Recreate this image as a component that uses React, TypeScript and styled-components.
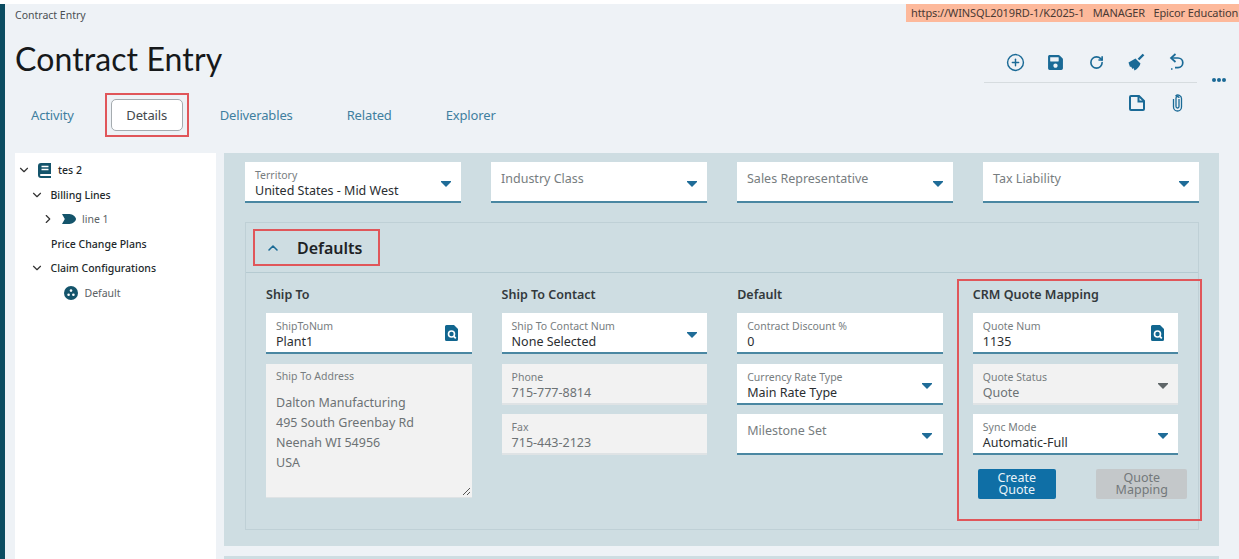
import React from 'react'
import styled, { createGlobalStyle } from 'styled-components'
import { ChevronDown, ChevronRight, ChevronUp, CirclePlus, RotateCw } from 'lucide-react'
import { FaSave } from 'react-icons/fa'

const GlobalStyle = createGlobalStyle`
  html, body {
    margin: 0;
    padding: 0;
    background: #eef2f6;
    font-family: "Noto Sans", "Open Sans", sans-serif;
  }
  * { box-sizing: border-box; }
`

const Page = styled.div`
  width: 1239px;
  height: 559px;
  overflow: hidden;
  padding-top: 4px;
  background: #fff;
`

const Shell = styled.div`
  display: flex;
  height: 555px;
  background: #eef2f6;
`

const SideBar = styled.div`
  width: 5px;
  background: #0b4c61;
`

const Content = styled.div`
  width: 1234px;
  padding-left: 10px;
`

const Header = styled.header`
  display: flex;
  justify-content: space-between;
  height: 149px;
`

const TitleBlock = styled.div`
  display: flex;
  flex-direction: column;
`

const Breadcrumb = styled.div`
  font-size: 10.5px;
  line-height: 22px;
  color: #4a4f52;
`

const Title = styled.h1`
  margin: 11px 0 0;
  font-family: "Lato", "Noto Sans", sans-serif;
  font-size: 32px;
  letter-spacing: 0.1px;
  font-weight: 400;
  line-height: 44px;
  color: #16191b;
`

const TabBar = styled.nav`
  display: flex;
  align-items: center;
  gap: 31px;
  height: 44px;
  margin-top: 12px;
  padding-left: 16px;
`

const TabLink = styled.span`
  font-size: 13px;
  letter-spacing: -0.15px;
  color: #3f7f9f;
  & + & {
    margin-left: 23px;
  }
`

const ActiveTabFrame = styled.div`
  width: 84px;
  height: 44px;
  padding: 4px;
  border: 2px solid #e0565a;
`

const ActiveTab = styled.div`
  display: flex;
  align-items: center;
  justify-content: center;
  height: 100%;
  font-size: 13px;
  letter-spacing: -0.15px;
  color: #43494d;
  background: #fff;
  border: 1px solid #a5abaf;
  border-radius: 5px;
`

const ActionBlock = styled.div`
  width: 333px;
`

const EnvBadge = styled.div`
  height: 18px;
  padding-left: 5px;
  font-size: 11px;
  letter-spacing: -0.1px;
  line-height: 18px;
  white-space: nowrap;
  color: #4a3a34;
  background: #fdb99b;
`

const ToolbarRow = styled.div`
  display: flex;
  align-items: center;
  margin-left: 78px;
`

const Toolbar = styled.div`
  width: 213px;
`

const ToolGroup = styled.div<{ $second?: boolean }>`
  display: grid;
  grid-template-columns: repeat(5, 40.5px);
  padding: ${p => (p.$second ? '10px 0 0 11px' : '30px 0 10px 11px')};
  border-top: ${p => (p.$second ? '1px solid #d6dcdf' : 'none')};
`

const ToolButton = styled.span<{ $column?: number }>`
  display: flex;
  align-items: center;
  justify-content: center;
  height: 20px;
  color: #1a6a96;
  grid-column: ${p => p.$column ?? 'auto'};
`

const MoreDots = styled.div`
  display: flex;
  gap: 1px;
  margin: 24px 0 0 15px;
`

const Dot = styled.i`
  width: 4px;
  height: 4px;
  border-radius: 50%;
  background: #1a6a96;
`

const Body = styled.div`
  display: flex;
  gap: 8px;
`

const TreePanel = styled.aside`
  width: 201px;
  height: 406px;
  padding-top: 5px;
  background: #fff;
`

const TreeRow = styled.div<{ $indent: number; $bold?: boolean }>`
  display: flex;
  align-items: center;
  gap: 6.5px;
  height: 24.5px;
  padding-left: ${p => p.$indent}px;
  font-size: 10.5px;
  font-weight: ${p => (p.$bold ? 500 : 400)};
  color: ${p => (p.$bold ? '#22282b' : '#5b6265')};
`

const Workspace = styled.div`
  width: 995px;
`

const MainPanel = styled.main`
  height: 393px;
  padding: 9px 20px 0 21px;
  background: #cedde2;
`

const NextPanel = styled.div`
  height: 10px;
  margin-top: 10px;
  background: #cedde2;
`

const FieldRow = styled.div`
  display: grid;
  grid-template-columns: repeat(4, 216px);
  gap: 30px;
`

const FieldBox = styled.div<{ $disabled?: boolean; $padRight?: number }>`
  display: flex;
  align-items: center;
  justify-content: space-between;
  height: 41px;
  padding: 0 ${p => p.$padRight ?? 10.5}px 0 10px;
  background: ${p => (p.$disabled ? '#f2f2f2' : '#fff')};
  border-bottom: 2px solid ${p => (p.$disabled ? '#dfe3e5' : '#4a87a2')};
`

const FieldText = styled.div`
  align-self: flex-start;
  padding-top: 6px;
`

const FieldLabel = styled.div`
  font-size: 10.5px;
  line-height: 14px;
  color: #777d80;
`

const FieldValue = styled.div<{ $muted?: boolean }>`
  margin-top: 1px;
  font-size: 12.5px;
  line-height: 16px;
  white-space: nowrap;
  color: ${p => (p.$muted ? '#6d7275' : '#2a2e31')};
`

const FieldPlaceholder = styled.div`
  padding-top: 1px;
  font-size: 12.5px;
  line-height: 20px;
  color: #777d80;
`

const CaretIcon = styled.svg<{ $muted?: boolean }>`
  flex: none;
  width: 10px;
  height: 6px;
  margin-top: 5px;
  fill: ${p => (p.$muted ? '#5f6668' : '#1f6c98')};
`

const LookupIcon = styled.svg`
  flex: none;
  width: 13px;
  height: 16px;
`

const Section = styled.section`
  height: 308px;
  margin-top: 19px;
  border: 1px solid #bfd0d6;
`

const SectionHeader = styled.div`
  display: flex;
  align-items: center;
  height: 50px;
  padding-left: 7px;
  border-bottom: 1px solid #b5cad1;
`

const SectionTitleFrame = styled.div`
  display: flex;
  align-items: center;
  gap: 16px;
  width: 127px;
  height: 37px;
  padding: 1px 0 0 10px;
  font-size: 16px;
  font-weight: 600;
  color: #1d2225;
  border: 2px solid #e0565a;
  svg {
    color: #1a6a96;
  }
`

const Columns = styled.div`
  display: grid;
  grid-template-columns: repeat(4, 205.5px);
  column-gap: 30.1px;
  padding: 11px 0 0 20px;
`

const Column = styled.div`
  display: flex;
  flex-direction: column;
  gap: 9.5px;
`

const MarkedColumn = styled(Column)`
  position: relative;
  &::after {
    content: '';
    position: absolute;
    inset: -5px -24px -22px -16px;
    border: 2px solid #e0565a;
    pointer-events: none;
  }
`

const ColumnTitle = styled.h3`
  margin: 0;
  height: 19.5px;
  font-size: 12.5px;
  font-weight: 600;
  line-height: 21px;
  color: #33393c;
`

const AddressBox = styled.div`
  position: relative;
  height: 134px;
  padding: 5px 10px;
  background: #f2f2f2;
  border-bottom: 1px solid #dfe3e5;
`

const AddressLines = styled.div`
  margin-top: 10px;
  font-size: 12.5px;
  line-height: 20.2px;
  color: #6d7275;
`

const ResizeHandle = styled.svg`
  position: absolute;
  right: 1px;
  bottom: 1px;
  width: 9px;
  height: 9px;
  stroke: #555;
`

const ButtonRow = styled.div`
  display: flex;
  justify-content: space-between;
  margin: 4px -9px 0 5px;
`

const ActionButton = styled.button<{ $disabled?: boolean }>`
  width: ${p => (p.$disabled ? 91 : 78)}px;
  height: 30px;
  padding: 0;
  border: 0;
  border-radius: 2px;
  font-family: inherit;
  font-size: 12.5px;
  line-height: 12px;
  color: ${p => (p.$disabled ? '#73787a' : '#e9f3f8')};
  background: ${p => (p.$disabled ? '#c4c8ca' : '#0f6fa6')};
`

const Caret = ({ muted }: { muted?: boolean }) => (
  <CaretIcon $muted={muted} viewBox="0 0 10 6">
    <path d="M0 0h10v1L5 6 0 1z" />
  </CaretIcon>
)

const Lookup = () => (
  <LookupIcon viewBox="0 0 13 16">
    <path d="M1.5 0H9l4 4v10.5a1.5 1.5 0 0 1-1.5 1.5h-10A1.5 1.5 0 0 1 0 14.5v-13A1.5 1.5 0 0 1 1.5 0z" fill="#11668f" />
    <circle cx="6.5" cy="9" r="3" fill="none" stroke="#fff" strokeWidth="1.6" />
    <path d="M8.6 11.1l2.200 2.200" stroke="#fff" strokeWidth="1.7" />
  </LookupIcon>
)

const BookIcon = () => (
  <svg width="14" height="15" viewBox="0 0 14 15">
    <path d="M3 0h10v11H3a1 1 0 0 0 0 2h10v2H3a3 3 0 0 1-3-3V3a3 3 0 0 1 3-3z" fill="#14546b" />
    <path d="M3.5 3.5h7M3.5 6.5h7" stroke="#fff" strokeWidth="1.3" />
  </svg>
)

const LineIcon = () => (
  <svg width="14" height="10" viewBox="0 0 14 10">
    <path d="M0 0h7.5c3 0 6.5 3 6.5 5s-3.500 5-6.500 5H0l2.800-5z" fill="#14546b" />
  </svg>
)

const DefaultIcon = () => (
  <svg width="14" height="14" viewBox="0 0 14 14">
    <circle cx="7" cy="7" r="7" fill="#14546b" />
    <circle cx="7" cy="4.600" r="1.300" fill="#fff" />
    <circle cx="4.600" cy="8.800" r="1.300" fill="#fff" />
    <circle cx="9.400" cy="8.800" r="1.300" fill="#fff" />
  </svg>
)

const BroomIcon = () => (
  <svg width="18" height="18" viewBox="0 0 18 18" fill="currentColor">
    <path d="M0.500 9.500L7.500 5.500 12.500 10.500C11.500 13.500 9.500 16 6.500 17.500L5.500 15 4.500 16 3 13.500 2 14z" />
    <path d="M10.500 6.500L15.500 1.500" stroke="currentColor" strokeWidth="2.400" />
  </svg>
)

const UndoIcon = () => (
  <svg width="16" height="20" viewBox="0 0 16 20" fill="none" stroke="currentColor" strokeWidth="1.700">
    <path d="M6.500 2L2 6l4.500 4" />
    <path d="M2.500 6H9a4.800 4.800 0 0 1 0 9.600H6" />
    <path d="M2 17h2" strokeDasharray="1.500 1" />
  </svg>
)

const NoteIcon = () => (
  <svg width="16" height="16" viewBox="0 0 16 16" fill="none" stroke="currentColor" strokeWidth="2">
    <path d="M1 2a1 1 0 0 1 1-1h8l5 5v8a1 1 0 0 1-1 1H2a1 1 0 0 1-1-1z" />
    <path d="M9.500 1.500V6.500H14.500" />
  </svg>
)

const ClipIcon = () => (
  <svg width="11" height="18" viewBox="0 0 11 18" fill="none" stroke="currentColor" strokeWidth="1.300">
    <path d="M7 5v7.500a1.500 1.500 0 0 1-3 0V4a1.500 1.500 0 0 1 3 0" />
    <path d="M1.500 5v8a4 4 0 0 0 8 0V4.500a3.500 3.500 0 0 0-6-2.400" />
  </svg>
)

type FieldProps = {
  label: string
  value?: string
  disabled?: boolean
  caret?: boolean
  lookup?: boolean
}

const Field = ({ label, value, disabled, caret, lookup }: FieldProps) => (
  <FieldBox $disabled={disabled} $padRight={lookup ? 14 : undefined}>
    <FieldText>
      {value ? (
        <>
          <FieldLabel>{label}</FieldLabel>
          <FieldValue $muted={disabled}>{value}</FieldValue>
        </>
      ) : (
        <FieldPlaceholder>{label}</FieldPlaceholder>
      )}
    </FieldText>
    {caret && <Caret muted={disabled} />}
    {lookup && <Lookup />}
  </FieldBox>
)

export default function App() {
  return (
    <Page>
      <GlobalStyle />
      <Shell>
        <SideBar />
        <Content>
          <Header>
            <TitleBlock>
              <Breadcrumb>Contract Entry</Breadcrumb>
              <Title>Contract Entry</Title>
              <TabBar>
                <TabLink>Activity</TabLink>
                <ActiveTabFrame>
                  <ActiveTab>Details</ActiveTab>
                </ActiveTabFrame>
                <TabLink>Deliverables</TabLink>
                <TabLink>Related</TabLink>
                <TabLink>Explorer</TabLink>
              </TabBar>
            </TitleBlock>
            <ActionBlock>
              <EnvBadge>https://WINSQL2019RD-1/K2025-1&nbsp;&nbsp;&nbsp;MANAGER&nbsp;&nbsp;&nbsp;Epicor Education</EnvBadge>
              <ToolbarRow>
                <Toolbar>
                  <ToolGroup>
                    <ToolButton><CirclePlus size={19} strokeWidth={1.8} /></ToolButton>
                    <ToolButton><FaSave size={17} /></ToolButton>
                    <ToolButton><RotateCw size={15} strokeWidth={2.6} /></ToolButton>
                    <ToolButton><BroomIcon /></ToolButton>
                    <ToolButton><UndoIcon /></ToolButton>
                  </ToolGroup>
                  <ToolGroup $second>
                    <ToolButton $column={4}><NoteIcon /></ToolButton>
                    <ToolButton $column={5}><ClipIcon /></ToolButton>
                  </ToolGroup>
                </Toolbar>
                <MoreDots>
                  <Dot />
                  <Dot />
                  <Dot />
                </MoreDots>
              </ToolbarRow>
            </ActionBlock>
          </Header>
          <Body>
            <TreePanel>
              <TreeRow $indent={2} $bold>
                <ChevronDown size={14} strokeWidth={2} color="#333" />
                <BookIcon />
                <span>tes 2</span>
              </TreeRow>
              <TreeRow $indent={15} $bold>
                <ChevronDown size={14} strokeWidth={2} color="#333" />
                <span>Billing Lines</span>
              </TreeRow>
              <TreeRow $indent={26}>
                <ChevronRight size={14} strokeWidth={2} color="#333" />
                <LineIcon />
                <span>line 1</span>
              </TreeRow>
              <TreeRow $indent={36} $bold>
                <span>Price Change Plans</span>
              </TreeRow>
              <TreeRow $indent={15} $bold>
                <ChevronDown size={14} strokeWidth={2} color="#333" />
                <span>Claim Configurations</span>
              </TreeRow>
              <TreeRow $indent={49}>
                <DefaultIcon />
                <span>Default</span>
              </TreeRow>
            </TreePanel>
            <Workspace>
              <MainPanel>
                <FieldRow>
                  <Field label="Territory" value="United States - Mid West" caret />
                  <Field label="Industry Class" caret />
                  <Field label="Sales Representative" caret />
                  <Field label="Tax Liability" caret />
                </FieldRow>
                <Section>
                  <SectionHeader>
                    <SectionTitleFrame>
                      <ChevronUp size={16} strokeWidth={2.4} />
                      <span>Defaults</span>
                    </SectionTitleFrame>
                  </SectionHeader>
                  <Columns>
                    <Column>
                      <ColumnTitle>Ship To</ColumnTitle>
                      <Field label="ShipToNum" value="Plant1" lookup />
                      <AddressBox>
                        <FieldLabel>Ship To Address</FieldLabel>
                        <AddressLines>
                          Dalton Manufacturing
                          <br />
                          495 South Greenbay Rd
                          <br />
                          Neenah WI 54956
                          <br />
                          USA
                        </AddressLines>
                        <ResizeHandle viewBox="0 0 9 9">
                          <path d="M1 8l7-7M5 8l3-3" />
                        </ResizeHandle>
                      </AddressBox>
                    </Column>
                    <Column>
                      <ColumnTitle>Ship To Contact</ColumnTitle>
                      <Field label="Ship To Contact Num" value="None Selected" caret />
                      <Field label="Phone" value="715-777-8814" disabled />
                      <Field label="Fax" value="715-443-2123" disabled />
                    </Column>
                    <Column>
                      <ColumnTitle>Default</ColumnTitle>
                      <Field label="Contract Discount %" value="0" />
                      <Field label="Currency Rate Type" value="Main Rate Type" caret />
                      <Field label="Milestone Set" caret />
                    </Column>
                    <MarkedColumn>
                      <ColumnTitle>CRM Quote Mapping</ColumnTitle>
                      <Field label="Quote Num" value="1135" lookup />
                      <Field label="Quote Status" value="Quote" caret disabled />
                      <Field label="Sync Mode" value="Automatic-Full" caret />
                      <ButtonRow>
                        <ActionButton>Create<br />Quote</ActionButton>
                        <ActionButton $disabled>Quote<br />Mapping</ActionButton>
                      </ButtonRow>
                    </MarkedColumn>
                  </Columns>
                </Section>
              </MainPanel>
              <NextPanel />
            </Workspace>
          </Body>
        </Content>
      </Shell>
    </Page>
  )
}
